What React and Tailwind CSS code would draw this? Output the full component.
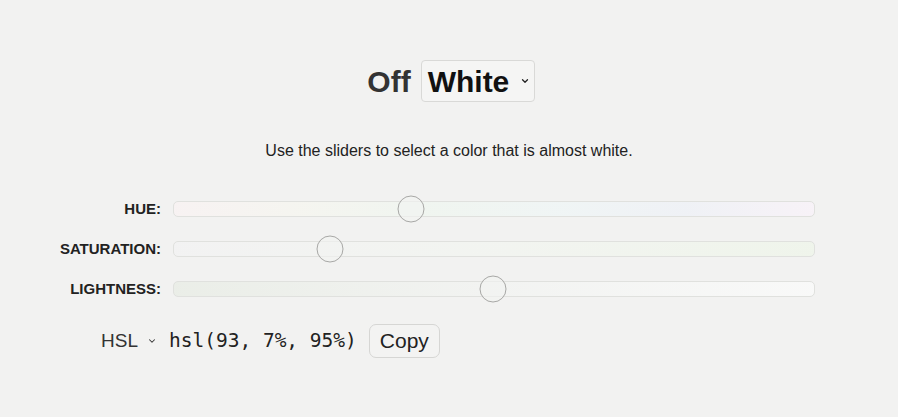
import { ChevronDown } from 'lucide-react'

const sans = { fontFamily: '"Liberation Sans", Arial, sans-serif' }

function Slider({ label, track, thumb }) {
  return (
    <div className="flex items-center h-[40px]">
      <div className="w-[150px] text-right text-[15px] font-bold text-[#222]">{label}</div>
      <div className="relative ml-[12px] w-[642px] h-[16px]">
        <div className={`w-full h-full rounded-[5px] border border-[#e0e1de] ${track}`} />
        <div
          className="absolute top-1/2 w-[27px] h-[27px] -translate-x-1/2 -translate-y-1/2 rounded-full border border-[#a8a8a6] bg-[#f2f3f1]/60"
          style={{ left: thumb }}
        />
      </div>
    </div>
  )
}

export default function App() {
  return (
    <div className="min-h-[417px] w-full bg-[#f2f2f1] text-[#222]" style={sans}>
      <div className="flex flex-col items-center pt-[60px]">
        <div className="flex items-center h-[42px] pl-[4px]">
          <span className="text-[30px] font-bold text-[#333]">Off</span>
          <div className="ml-[10px] h-[42px] w-[114px] flex items-center rounded-[4px] border border-[#d9d9d7] bg-[#f5f5f4] pl-[6px]">
            <span className="text-[30px] font-bold text-[#111]">White</span>
            <ChevronDown className="ml-[11px] w-[10px] h-[10px] text-[#222]" strokeWidth={3} />
          </div>
        </div>
        <p className="mt-[37px] text-[16px] text-[#222]">Use the sliders to select a color that is almost white.</p>
      </div>

      <div className="mt-[26px] pl-[11px]">
        <Slider
          label="HUE:"
          thumb="238px"
          track="bg-[linear-gradient(to_right,hsl(0,25%,96%),hsl(60,20%,95%),hsl(120,20%,95%),hsl(180,20%,95%),hsl(220,25%,95%),hsl(300,25%,96%))]"
        />
        <Slider
          label="SATURATION:"
          thumb="157px"
          track="bg-[linear-gradient(to_right,hsl(93,0%,95%),hsl(93,15%,95%),hsl(93,30%,94%))]"
        />
        <Slider
          label="LIGHTNESS:"
          thumb="320px"
          track="bg-[linear-gradient(to_right,hsl(93,15%,92%),hsl(93,7%,95%),hsl(93,5%,97.5%))]"
        />
      </div>

      <div className="flex items-center mt-[15px] pl-[101px]">
        <span className="text-[19px] text-[#333]">HSL</span>
        <ChevronDown className="ml-[9px] w-[10px] h-[10px] text-[#333]" strokeWidth={2.5} />
        <span
          className="ml-[12px] text-[19.5px] text-[#222]"
          style={{ fontFamily: '"DejaVu Sans Mono", monospace' }}
        >
          hsl(93, 7%, 95%)
        </span>
        <button className="ml-[12px] h-[34px] px-[10px] rounded-[7px] border border-[#d6d6d4] bg-[#f3f3f2] text-[21px] text-[#222]">
          Copy
        </button>
      </div>
    </div>
  )
}
